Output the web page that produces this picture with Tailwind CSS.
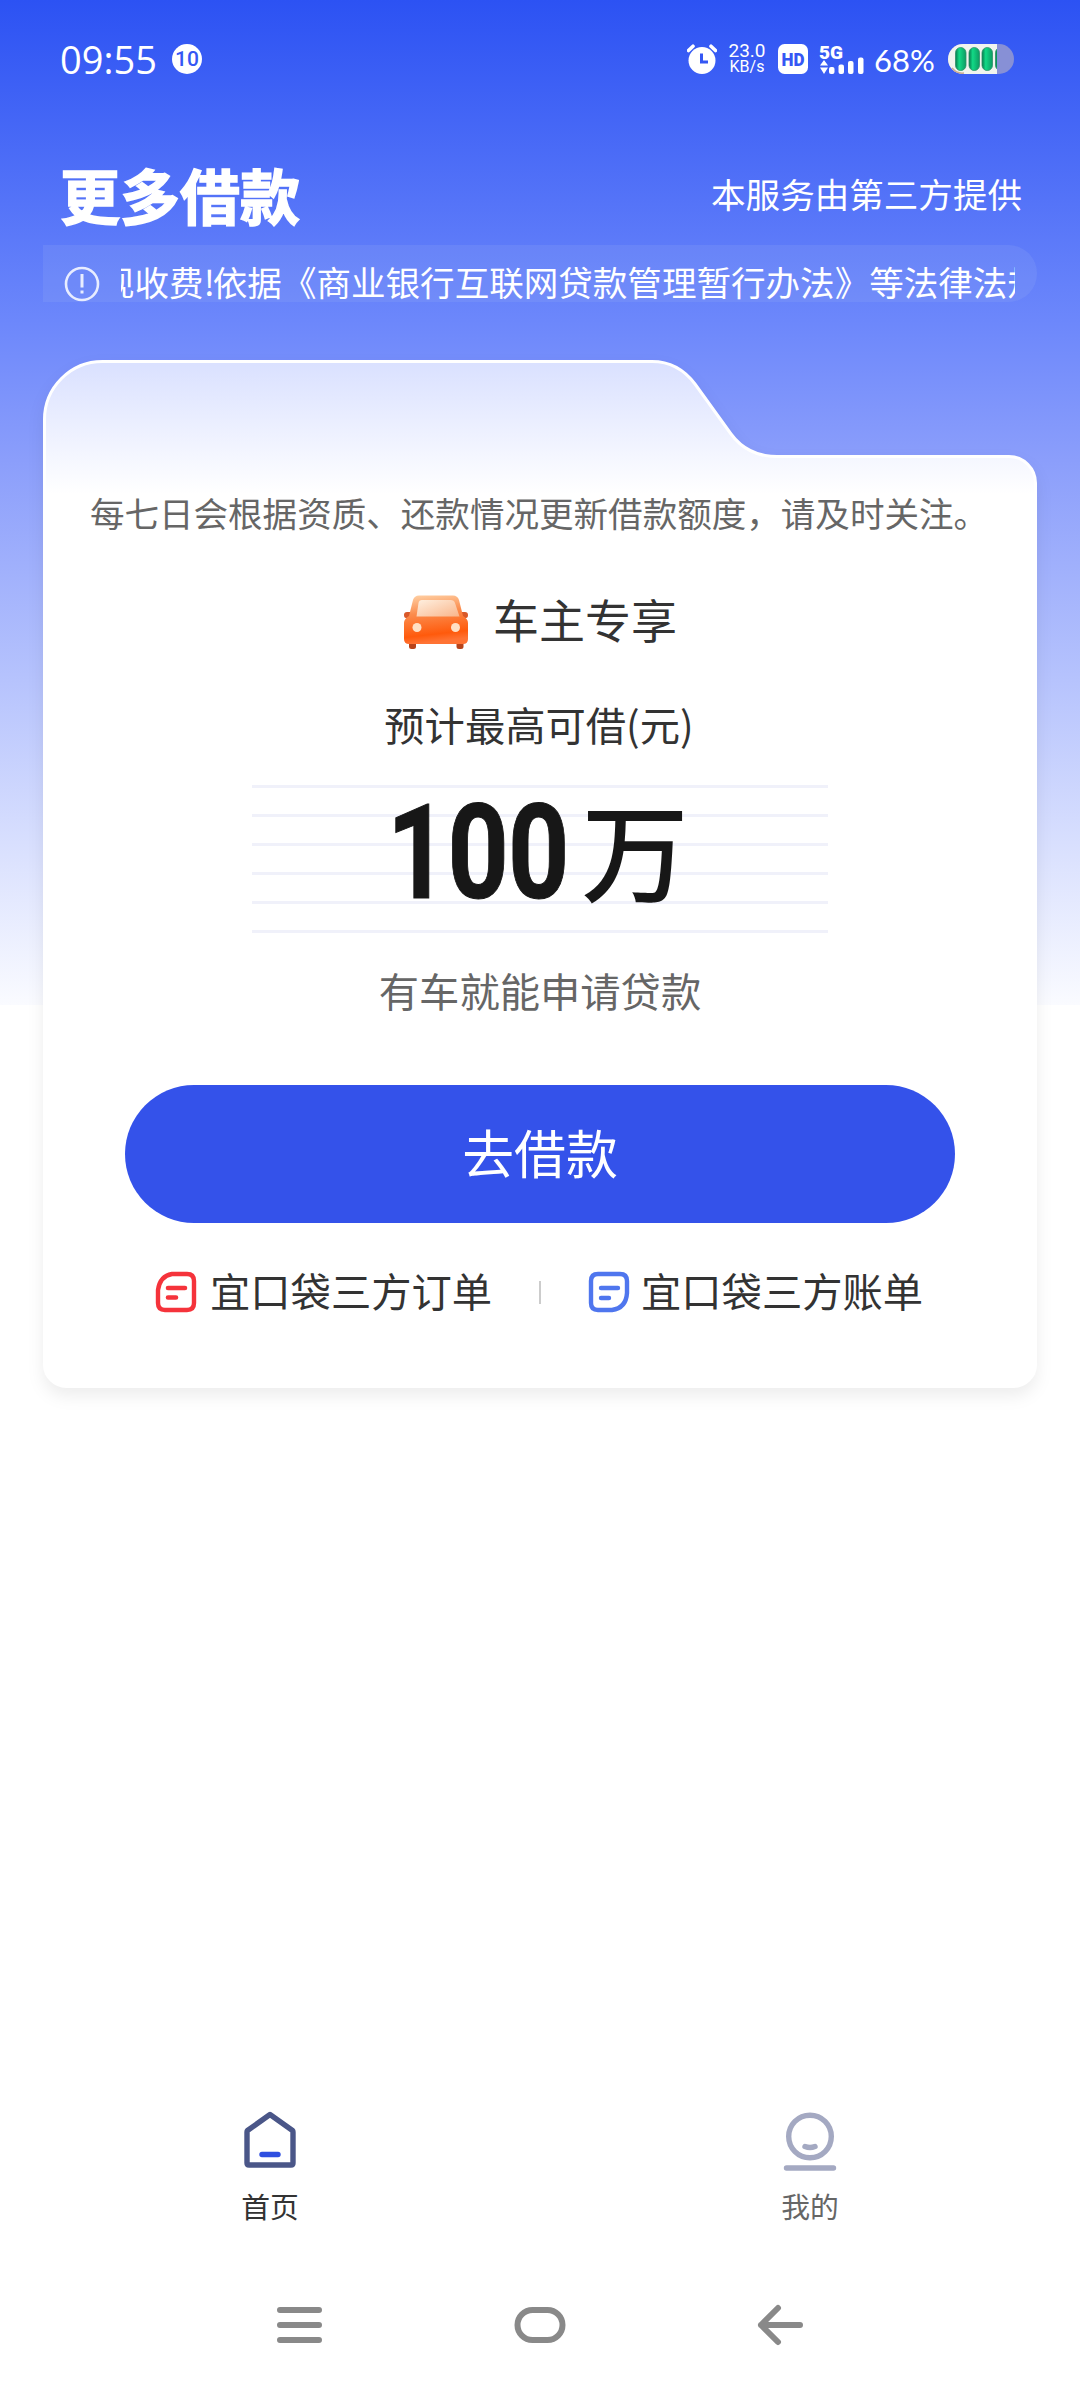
<!DOCTYPE html>
<html lang="zh-CN">
<head>
<meta charset="utf-8">
<title>更多借款</title>
<script src="https://cdn.jsdelivr.net/npm/@tailwindcss/browser@4"></script>
</head>
<body class="bg-white">
<div class="flex flex-col w-[1080px] h-[2388px] overflow-hidden bg-[linear-gradient(180deg,#2c52f3_0px,#6c87fb_320px,#8b9efb_460px,#b6c3fd_680px,#fafbff_1005px,#ffffff_1005px)] text-[#333] font-['Noto_Sans_CJK_SC',sans-serif]">

  <!-- Status bar -->
  <header class="flex items-center h-[118px] pl-[60px] pr-[66px] text-white font-[Lato,'Noto_Sans_CJK_SC',sans-serif]">
    <span class="w-[112px] text-[38px] leading-none whitespace-nowrap font-['Open_Sans',sans-serif]">09:55</span>
    <span class="flex items-center justify-center size-[30px] rounded-full bg-white text-[#3557f4] text-[21px] font-medium leading-none font-[Roboto,sans-serif]">10</span>
    <div class="flex items-center ml-auto">
      <svg class="w-[30px] h-[30px]" viewBox="0 0 30 30"><circle cx="15" cy="16.500" r="13.500" fill="#fff"/><path d="M1.500 6.500L6 2.200M28.500 6.500L24 2.200" stroke="#fff" stroke-width="3.600" stroke-linecap="round"/><path d="M14.500 9.500V18H21" fill="none" stroke="#3557f4" stroke-width="3"/></svg>
      <div class="flex flex-col items-center w-[40px] ml-[10px] font-[Roboto,sans-serif]"><span class="text-[19px] leading-[16px]">23.0</span><span class="text-[16px] leading-[16px]">KB/s</span></div>
      <svg class="w-[30px] h-[30px] ml-[11px]" viewBox="0 0 30 30"><rect width="30" height="30" rx="6.500" fill="#fff"/><text x="3.500" y="21.500" font-family="Roboto" font-weight="900" font-size="18" textLength="23" lengthAdjust="spacingAndGlyphs" fill="#3557f4">HD</text></svg>
      <svg class="w-[46px] h-[30px] ml-[11px] overflow-visible" viewBox="0 0 46 30"><text x="0" y="14.500" font-family="Roboto" font-weight="900" font-size="19" textLength="24" lengthAdjust="spacingAndGlyphs" fill="#fff">5G</text><path d="M1 21.500L5 16L9 21.500zM1 23.500L5 30L9 23.500z" fill="#fff"/><rect x="10" y="23" width="5.500" height="7" rx="2" fill="#fff"/><rect x="19.500" y="20.500" width="5.500" height="9.500" rx="2" fill="#fff"/><rect x="29" y="17" width="5.500" height="13" rx="2" fill="#fff"/><rect x="39" y="13.500" width="5.500" height="16.500" rx="2" fill="#fff"/></svg>
      <span class="w-[64px] ml-[9px] mt-[2px] text-[31px] leading-none whitespace-nowrap">68%</span>
      <svg class="w-[66px] h-[30px] ml-[10px]" viewBox="0 0 66 30">
        <defs><linearGradient id="cell" x1="0" x2="1"><stop offset="0" stop-color="#067a4d"/><stop offset=".35" stop-color="#12d986"/><stop offset="1" stop-color="#0c9b62"/></linearGradient><clipPath id="charge"><path d="M0 0H49V30H0z"/></clipPath></defs>
        <rect width="66" height="30" rx="15" fill="#8790d6"/>
        <g clip-path="url(#charge)"><rect width="66" height="30" rx="15" fill="#f1f4ee"/><path d="M4 24Q9 30 16 29" fill="none" stroke="#c9a98f" stroke-width="1.500"/>
        <g fill="url(#cell)" stroke="#2f8f68" stroke-width=".8"><rect x="7.500" y="3.500" width="10.500" height="23" rx="5.200"/><rect x="21" y="3.500" width="10.500" height="23" rx="5.200"/><rect x="34" y="3.500" width="10.500" height="23" rx="5.200"/><rect x="47.500" y="3.500" width="10.500" height="23" rx="5.200"/></g></g>
      </svg>
    </div>
  </header>

  <!-- Page heading -->
  <div class="flex items-center justify-between h-[127px] pl-[60px] pr-[58px] pt-[24px] text-white">
    <h1 class="text-[60px] leading-[60px] font-bold [-webkit-text-stroke:1.5px_white] [paint-order:stroke] [stroke-linejoin:round]">更多借款</h1>
    <span class="text-[34.56px] leading-none">本服务由第三方提供</span>
  </div>

  <!-- Scrolling notice -->
  <div class="flex items-center h-[57px] ml-[43px] mr-[43px] pl-[21px] pr-[22px] rounded-r-full bg-[#9ab0f5]/18 text-white">
    <svg class="w-[36px] h-[36px] mt-[21px] shrink-0" viewBox="0 0 36 36" fill="none" stroke="#e8edff" stroke-width="2.600"><circle cx="18" cy="18" r="16"/><path d="M18 8V21.500M18 24.500V27.500" stroke-width="3"/></svg>
    <div class="flex justify-start w-[894px] h-[50px] ml-[21px] mt-[14px] overflow-hidden text-[34.56px] leading-[50px] whitespace-nowrap"><span class="-ml-[21px]">现收费<span class="tracking-[-2px]">!</span>依据《商业银行互联网贷款管理暂行办法》等法律法规</span></div>
  </div>

  <!-- Loan card -->
  <main class="relative flex flex-col items-center w-[994px] h-[1028px] mt-[58px] ml-[43px]">
    <svg class="absolute inset-0 w-[994px] h-[1028px] overflow-visible drop-shadow-[0_8px_8px_rgba(0,0,0,0.07)]" viewBox="0 0 994 1028">
      <defs><linearGradient id="tab" gradientUnits="userSpaceOnUse" x1="0" y1="0" x2="0" y2="134"><stop offset="0" stop-color="#d9e0ff"/><stop offset="1" stop-color="#fff"/></linearGradient></defs>
      <path d="M1.500 59.500A58 58 0 0 1 59.500 1.500H609C630 1.500 643 12 652 24L688 74C699 89 714 96.500 734 96.500H966A26.500 26.500 0 0 1 992.500 123V1004.500A22 22 0 0 1 970.500 1026.500H23.500A22 22 0 0 1 1.500 1004.500Z" fill="url(#tab)" stroke="#fff" stroke-width="3"/>
    </svg>
    <div class="relative flex flex-col items-center w-full h-full pt-[132px]">
      <p class="-ml-[2px] text-[34.56px] leading-[40px] whitespace-nowrap text-[#666]">每七日会根据资质、还款情况更新借款额度，请及时关注。</p>
      <div class="flex items-center gap-[24px] h-[54px] mt-[63px]">
        <svg class="w-[66px] h-[54px]" viewBox="0 0 66 54">
          <defs><linearGradient id="body" x1="0" y1="0" x2=".15" y2="1"><stop offset="0" stop-color="#ffd3a8"/><stop offset=".4" stop-color="#fb8c4d"/><stop offset=".85" stop-color="#ff5a0c"/><stop offset="1" stop-color="#ff7334"/></linearGradient><linearGradient id="glass" x1="0" y1="0" x2="1" y2="1"><stop offset="0" stop-color="#fff0e0"/><stop offset="1" stop-color="#f9b58a"/></linearGradient></defs>
          <rect x="6" y="46" width="7" height="8" rx="2.500" fill="#b8431a"/><rect x="53.500" y="46" width="7" height="8" rx="2.500" fill="#b8431a"/>
          <path d="M1 20Q1 17 4 17H9V23H3Q1 23 1 20zM65 20Q65 17 62 17H57V23H63Q65 23 65 20z" fill="#d9592a"/>
          <path d="M16 .5H50Q54.500 .5 56 5L60 21Q65 24 65 28V44Q65 49 60 49H6Q1 49 1 44V28Q1 24 6 21L10 5Q11.500 .5 16 .5Z" fill="url(#body)"/>
          <path d="M19 5H47.500Q51 5 52 8L56.500 21.500H13.500L15.500 8Q16 5 19 5Z" fill="url(#glass)"/>
          <circle cx="14" cy="32.500" r="4.500" fill="#ffe0c4"/><circle cx="52.500" cy="32.500" r="4.500" fill="#ffe0c4"/>
        </svg>
        <span class="-mt-[8px] text-[46px] leading-[54px]">车主专享</span>
      </div>
      <p class="mt-[50px] -ml-[2px] text-[40.3px] leading-[50px] whitespace-nowrap">预计最高可借(元)</p>
      <div class="flex justify-center items-start w-[576px] h-[148px] mt-[36px] bg-[repeating-linear-gradient(180deg,#f0f1fa_0px,#f0f1fa_3px,transparent_3px,transparent_29.1px)] text-[#171717]">
        <div class="flex h-[132px] mt-[2px] -ml-[4px] leading-[132px]">
          <span class="w-[195px] text-[132px] font-bold [-webkit-text-stroke:1px_#171717] tracking-[-1px] font-[Roboto,sans-serif] scale-x-[0.81] origin-left">100</span>
          <span class="w-[108px] -mt-[5px] text-[107px] font-medium">万</span>
        </div>
      </div>
      <p class="mt-[32px] text-[40.3px] leading-[50px] text-[#666]">有车就能申请贷款</p>
      <button class="flex items-center justify-center w-[830px] h-[138px] mt-[70px] pb-[5px] rounded-full bg-[#3452ea] text-white text-[51.84px] leading-none">去借款</button>
      <div class="flex items-center w-full h-[60px] mt-[39px] pl-[112px] text-[40.3px] leading-[60px]">
        <a class="flex items-center gap-[13px] w-[384px]">
          <svg class="w-[42px] h-[42px]" viewBox="0 0 42 42" fill="none" stroke="#f5333b" stroke-linecap="round"><path d="M17 3H32Q39 3 39 10V32Q39 39 32 39H10Q3 39 3 32V19Q5 5 17 3Z" stroke-width="4.400" stroke-linejoin="round"/><path d="M13 17H30M13 26.500H21" stroke-width="4.600"/></svg>
          <span class="-mt-[4px]">宜口袋三方订单</span>
        </a>
        <i class="block w-[2px] h-[23px] bg-[#ccc]"></i>
        <a class="flex items-center gap-[11px] ml-[47px]">
          <svg class="w-[42px] h-[42px]" viewBox="0 0 42 42" fill="none" stroke="#4f76ee" stroke-linecap="round"><path d="M10 3H32Q39 3 39 10V22Q38 37 24 39H10Q3 39 3 32V10Q3 3 10 3Z" stroke-width="4.400" stroke-linejoin="round"/><path d="M13 17H30M13 27H21" stroke-width="4.400"/></svg>
          <span class="-mt-[4px]">宜口袋三方账单</span>
        </a>
      </div>
    </div>
  </main>

  <!-- Bottom tabs -->
  <nav class="grid grid-cols-2 mt-auto h-[153px] text-[28.8px] leading-[40px]">
    <a class="flex flex-col items-center">
      <svg class="w-[60px] h-[62px]" viewBox="0 0 60 62" fill="none" stroke-linecap="round" stroke-linejoin="round"><path d="M30 5.500L52.500 21.500Q53 22 53 23V54Q53 56 51 56H9Q7 56 7 54V23Q7 22 7.500 21.500Z" stroke="#4a5688" stroke-width="5.400"/><path d="M22 45.500H38" stroke="#2f4fe0" stroke-width="5.400"/></svg>
      <span class="mt-[15px]">首页</span>
    </a>
    <a class="flex flex-col items-center text-[#666]">
      <svg class="w-[60px] h-[62px]" viewBox="0 0 60 62" fill="none" stroke="#a4a9c2" stroke-width="5.400" stroke-linecap="round"><circle cx="30" cy="27.500" r="21.300"/><path d="M25 37.500Q30 39.500 35 37.500M6.500 59H53.500"/></svg>
      <span class="mt-[15px]">我的</span>
    </a>
  </nav>

  <!-- System navigation -->
  <footer class="flex items-center justify-between h-[126px] pl-[276px] pr-[276px]">
    <svg class="w-[48px] h-[44px]" viewBox="0 0 48 44" stroke="#898989" stroke-width="6" stroke-linecap="round"><path d="M4 7H43M4 22H43M4 37H43"/></svg>
    <svg class="w-[52px] h-[44px]" viewBox="0 0 52 44" fill="none" stroke="#898989" stroke-width="6"><rect x="3.500" y="7" width="45" height="30" rx="15"/></svg>
    <svg class="w-[48px] h-[44px]" viewBox="0 0 48 44" fill="none" stroke="#898989" stroke-width="6" stroke-linecap="round" stroke-linejoin="round"><path d="M44 22H5M22 5L5 22L22 39"/></svg>
  </footer>
</div>
</body>
</html>
